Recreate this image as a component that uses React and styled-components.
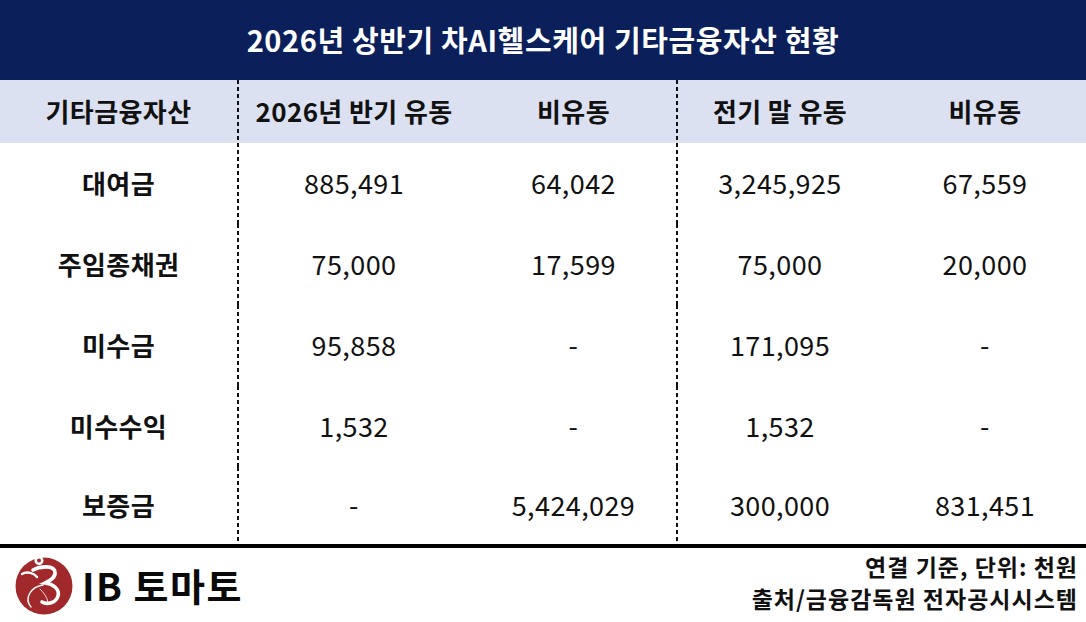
import styled, { createGlobalStyle } from 'styled-components';

const GlobalStyle = createGlobalStyle`
  html, body {
    margin: 0;
    padding: 0;
    background: #ffffff;
  }
  * {
    box-sizing: border-box;
  }
`;

const FONT = `'Noto Sans CJK KR', 'Noto Sans', sans-serif`;
const COLUMNS = '237px 234px 205px 208px 1fr';

const Page = styled.div`
  width: 1086px;
  height: 622px;
  display: flex;
  flex-direction: column;
  font-family: ${FONT};
  color: #111111;
  overflow: hidden;
`;

const TitleBar = styled.header`
  height: 80px;
  background: #0b1f5b;
  color: #ffffff;
  display: flex;
  align-items: center;
  justify-content: center;
  font-size: 29px;
  font-weight: 700;
  letter-spacing: 0.6px;
  padding-bottom: 2px;
`;

const Table = styled.div`
  display: flex;
  flex-direction: column;
`;

const Row = styled.div`
  display: grid;
  grid-template-columns: ${COLUMNS};
  height: ${({ $head }) => ($head ? '63px' : '81px')};
  background: ${({ $head }) => ($head ? '#dce1f1' : '#ffffff')};

  &:last-child {
    height: 77px;
  }
`;

const Cell = styled.div`
  display: flex;
  align-items: center;
  justify-content: center;
  font-size: ${({ $bold }) => ($bold ? '26px' : '27px')};
  font-weight: ${({ $bold }) => ($bold ? 700 : 400)};
  letter-spacing: 0.4px;
  padding-bottom: 2px;
  background-image: ${({ $divider }) =>
    $divider ? 'linear-gradient(#111111 60%, transparent 60%)' : 'none'};
  background-size: 2px 7px;
  background-repeat: repeat-y;
  background-position: 0 0;
`;

const Footer = styled.footer`
  flex: 1;
  border-top: 4px solid #000000;
  display: flex;
  align-items: center;
  justify-content: space-between;
  padding: 0 8px 0 14px;
`;

const Brand = styled.div`
  display: flex;
  align-items: center;
  gap: 8px;
`;

const BrandName = styled.span`
  font-size: 38px;
  font-weight: 700;
  letter-spacing: 1.5px;
  line-height: 1;
  color: #0a0a0a;
`;

const Notes = styled.div`
  display: flex;
  flex-direction: column;
  align-items: flex-end;
  margin-bottom: 6px;
  font-size: 23px;
  font-weight: 700;
  line-height: 32px;
  letter-spacing: 1px;
`;

const headers = ['기타금융자산', '2026년 반기 유동', '비유동', '전기 말 유동', '비유동'];

const rows = [
  ['대여금', '885,491', '64,042', '3,245,925', '67,559'],
  ['주임종채권', '75,000', '17,599', '75,000', '20,000'],
  ['미수금', '95,858', '-', '171,095', '-'],
  ['미수수익', '1,532', '-', '1,532', '-'],
  ['보증금', '-', '5,424,029', '300,000', '831,451'],
];

// 점선 구분선이 들어가는 열
const dividerCols = [1, 3];

function Logo() {
  return (
    <svg width="60" height="60" viewBox="0 0 60 60">
      <circle cx="30" cy="31" r="28.5" fill="#a1292b" />
      <circle cx="25" cy="5.5" r="4.5" fill="#ffffff" />
      <circle cx="25" cy="5.5" r="2" fill="#a1292b" />
      <path
        d="M19 15 C 26 11, 40 10, 41 17 C 42 23, 35 26, 31 28 C 39 29, 46 34, 44 41 C 42 48, 33 50, 28 47"
        fill="none"
        stroke="#ffffff"
        strokeWidth="3.6"
        strokeLinecap="round"
      />
      <path
        d="M8 19 C 13 16, 20 18, 23 22"
        fill="none"
        stroke="#ffffff"
        strokeWidth="2.4"
        strokeLinecap="round"
      />
      <path
        d="M17 52 C 10 44, 16 32, 29 30"
        fill="none"
        stroke="#ffffff"
        strokeWidth="1.4"
        strokeLinecap="round"
      />
      <path
        d="M26 34 C 30 38, 33 42, 34 47"
        fill="none"
        stroke="#ffffff"
        strokeWidth="1"
        strokeLinecap="round"
        opacity="0.8"
      />
    </svg>
  );
}

export default function App() {
  return (
    <>
      <GlobalStyle />
      <Page>
        <TitleBar>2026년 상반기 차AI헬스케어 기타금융자산 현황</TitleBar>
        <Table>
          <Row $head>
            {headers.map((h, i) => (
              <Cell key={i} $bold $divider={dividerCols.includes(i)}>
                {h}
              </Cell>
            ))}
          </Row>
          {rows.map((row) => (
            <Row key={row[0]}>
              {row.map((value, i) => (
                <Cell key={i} $bold={i === 0} $divider={dividerCols.includes(i)}>
                  {value}
                </Cell>
              ))}
            </Row>
          ))}
        </Table>
        <Footer>
          <Brand>
            <Logo />
            <BrandName>IB 토마토</BrandName>
          </Brand>
          <Notes>
            <span>연결 기준, 단위: 천원</span>
            <span>출처/금융감독원 전자공시시스템</span>
          </Notes>
        </Footer>
      </Page>
    </>
  );
}
